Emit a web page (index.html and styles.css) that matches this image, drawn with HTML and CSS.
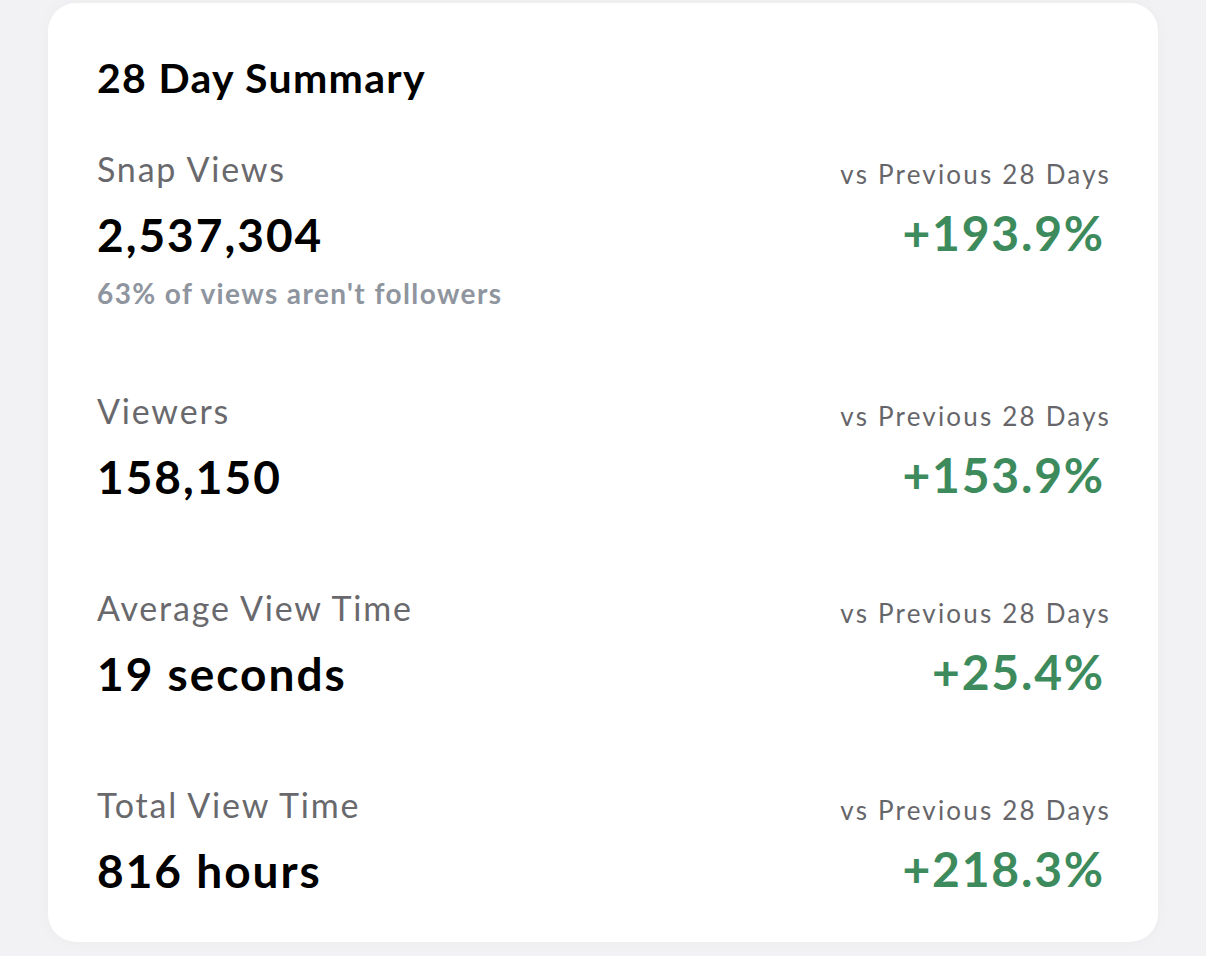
FILE: index.html
```html
<!DOCTYPE html>
<html lang="en">
<head>
<meta charset="utf-8">
<title>28 Day Summary</title>
<link rel="stylesheet" href="styles.css">
</head>
<body>
<main class="card">
  <h1 class="title">28 Day Summary</h1>
  <section class="row">
    <div class="left">
      <div class="label">Snap Views</div>
      <div class="value">2,537,304</div>
      <div class="note">63% of views aren't followers</div>
    </div>
    <div class="right">
      <div class="compare">vs Previous 28 Days</div>
      <div class="pct">+193.9%</div>
    </div>
  </section>
  <section class="row">
    <div class="left">
      <div class="label">Viewers</div>
      <div class="value">158,150</div>
    </div>
    <div class="right">
      <div class="compare">vs Previous 28 Days</div>
      <div class="pct">+153.9%</div>
    </div>
  </section>
  <section class="row">
    <div class="left">
      <div class="label">Average View Time</div>
      <div class="value">19 seconds</div>
    </div>
    <div class="right">
      <div class="compare">vs Previous 28 Days</div>
      <div class="pct">+25.4%</div>
    </div>
  </section>
  <section class="row">
    <div class="left">
      <div class="label">Total View Time</div>
      <div class="value">816 hours</div>
    </div>
    <div class="right">
      <div class="compare">vs Previous 28 Days</div>
      <div class="pct">+218.3%</div>
    </div>
  </section>
</main>
</body>
</html>
```

FILE: styles.css
```css
html, body {
  margin: 0;
  padding: 0;
}
body {
  background: #f2f2f4;
  font-family: Lato, "Noto Sans", sans-serif;
  width: 1206px;
  height: 956px;
  overflow: hidden;
  padding-top: 3px;
  box-sizing: border-box;
}
.card {
  margin-left: 48px;
  width: 1110px;
  height: 939px;
  box-sizing: border-box;
  background: #ffffff;
  border-radius: 28px;
  box-shadow: 0 0 16px rgba(0, 0, 0, 0.03);
  padding: 50px 49px 29px 49px;
  display: flex;
  flex-direction: column;
  gap: 65px;
}
.title {
  margin: 0 0 -23px 0;
  font-size: 41px;
  line-height: 50px;
  font-weight: 700;
  letter-spacing: 1.3px;
  color: #000000;
}
.row {
  display: flex;
  justify-content: space-between;
  align-items: flex-start;
}
.left {
  display: flex;
  flex-direction: column;
}
.label {
  font-size: 34px;
  line-height: 48px;
  letter-spacing: 1.8px;
  color: #69696d;
}
.value {
  font-size: 46px;
  line-height: 84px;
  font-weight: 700;
  letter-spacing: 2px;
  color: #000000;
}
.note {
  font-size: 28px;
  line-height: 32px;
  font-weight: 700;
  letter-spacing: 1.4px;
  color: #8f959e;
  margin-bottom: 13px;
}
.right {
  display: flex;
  flex-direction: column;
  align-items: flex-end;
  padding-top: 5px;
}
.compare {
  font-size: 26px;
  line-height: 48px;
  letter-spacing: 2.2px;
  margin-right: -2px;
  color: #66666a;
}
.pct {
  font-size: 48px;
  line-height: 70px;
  font-weight: 700;
  letter-spacing: 1.8px;
  margin-right: 4px;
  color: #3d8b5c;
}
```
